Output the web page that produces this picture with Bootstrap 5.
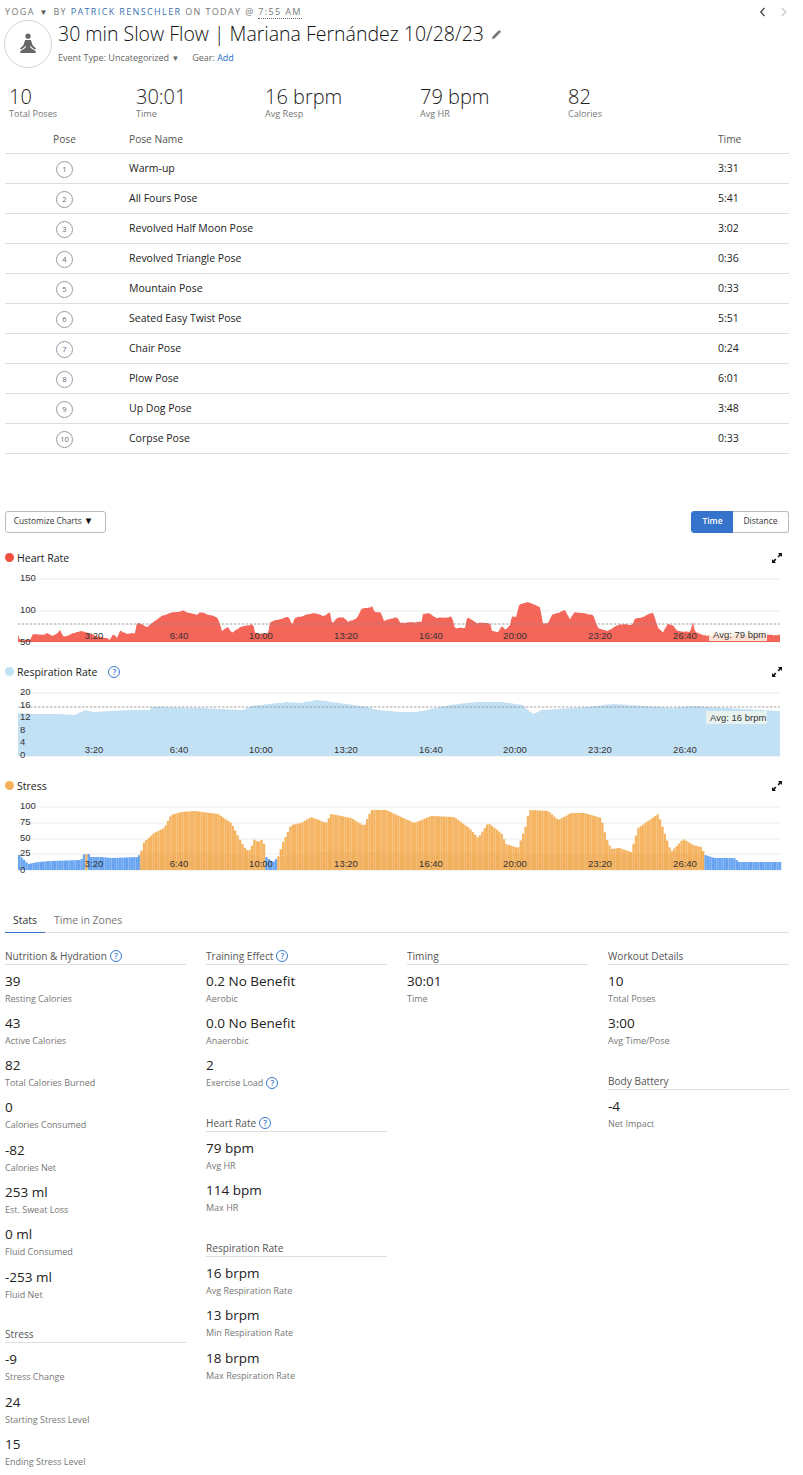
<!DOCTYPE html>
<html lang="en">
<head>
  <meta charset="UTF-8">
  <meta name="viewport" content="width=device-width, initial-scale=1">
  <title>30 min Slow Flow</title>
  <link href="https://cdn.jsdelivr.net/npm/bootstrap@5.3.0/dist/css/bootstrap.min.css" rel="stylesheet">
  <style>
    body { font-family: "Open Sans", sans-serif; color: #222; background: #fff; overflow: hidden; }
    .page-wrap { padding: 0 14px 0 5px; width: 803px; height: 1475px; overflow: hidden; }
    .crumbs { height: 20px; font-size: 9px; letter-spacing: 1.37px; color: #777; text-transform: uppercase; line-height: 12px; padding-top: 6px; position: relative; }
    .crumbs a { color: #3a6fb5; text-decoration: none; }
    .crumbs .dotted { border-bottom: 1px dotted #666; }
    .crumbs .caret-mark { font-size: 8px; letter-spacing: 0; margin: 0 6px 0 1px; color: #555; }
    .pager { position: absolute; right: 0; top: 7px; }
    .activity-icon { width: 48px; height: 48px; border: 1.5px solid #d4d4d4; border-radius: 50%; margin-left: -1px; flex: none; }
    .head-row { height: 48px; margin-top: 0; }
    .head-title { font-size: 19.5px; line-height: 28px; margin: 0; font-weight: 300; color: #111; margin-left: 6px; }
    .head-meta { font-size: 9px; color: #666; line-height: 12px; margin: 4px 0 0 6px; gap: 13px; }
    .head-meta a { color: #2a6ecb; text-decoration: none; }
    .stat-strip { height: 40px; margin-top: 17px; padding-left: 4px; }
    .strip-num { font-size: 20px; line-height: 24px; color: #222; font-weight: 300; }
    .strip-lab { font-size: 9.1px; line-height: 12px; color: #777; margin-top: -1px; }
    .pose-table { font-size: 10.5px; margin: 0; table-layout: fixed; color: #222; }
    .pose-table th { font-weight: 400; font-size: 10.2px; color: #555; height: 28px; padding: 2px 5px 0; vertical-align: middle; border-bottom: 1px solid #ddd; }
    .pose-table td { height: 30px; padding: 2px 5px 0; vertical-align: middle; border-bottom: 1px solid #ddd; }
    .pose-num { width: 17px; height: 17px; border: 1px solid #999; border-radius: 50%; font-size: 7.5px; color: #666; line-height: 15px; text-align: center; display: inline-block; }
    .chart-tools { margin-top: 57px; height: 22px; }
    .customize-btn { font-size: 8.3px; height: 22px; width: 101px; padding: 0 4px 0 0; color: #333; border: 1px solid #bbb; border-radius: 3px; background: #fff; }
    .customize-btn span { color: #111; font-size: 9.5px; line-height: 1; }
    .range-toggle .btn { font-size: 8.5px; height: 22px; padding: 0; color: #333; border: 1px solid #bbb; background: #fff; border-radius: 3px; }
    .range-toggle .btn.active-range { width: 43px; background: #3674cc; border-color: #3674cc; color: #fff; font-weight: 600; border-top-right-radius: 0; border-bottom-right-radius: 0; }
    .range-toggle .btn.plain-range { width: 56px; border-left: 0; border-top-left-radius: 0; border-bottom-left-radius: 0; }
    .chart-title { font-size: 10.5px; color: #222; height: 16px; line-height: 16px; }
    .title-label { gap: 3px; }
    .dot-mark { width: 9px; height: 9px; border-radius: 50%; display: inline-block; flex: none; }
    .help-mark { width: 12px; height: 12px; border: 1.3px solid #3a78d0; border-radius: 50%; font-size: 8.5px; line-height: 10px; text-align: center; color: #3a78d0; display: inline-block; font-weight: 600; flex: none; }
    .expand-icon { margin-right: 7px; }
    .chart-svg { display: block; width: 784px; }
    .chart-svg text { font-family: "Liberation Sans", Arial, sans-serif; font-size: 9.5px; fill: #333; }
    .stat-tabs { border-bottom: 1px solid #ddd; height: 26px; margin-top: 29px; }
    .stat-tabs .nav-link { font-size: 10.5px; line-height: 14px; padding: 6px 0 5px; border: 0; color: #777; background: none; margin-right: 9px; }
    .stat-tabs .nav-link.active { color: #333; width: 40px; text-align: center; border-bottom: 1px solid #3674cc; border-radius: 0; }
    .stats-grid { --bs-gutter-x: 20px; margin-top: 15px; }
    .group-title { font-size: 10.1px; line-height: 16px; height: 17px; border-bottom: 1px solid #ddd; color: #555; margin-bottom: 7px; display: flex; align-items: center; gap: 3px; }
    .group-next { margin-top: 16.5px; }
    .stat-item { height: 42.3px; }
    .stat-val { font-size: 13.5px; line-height: 18px; margin-bottom: 2px; color: #222; }
    .stat-lab { font-size: 9px; line-height: 14px; color: #777; display: flex; align-items: center; gap: 3px; }
  </style>
</head>
<body>
  <div class="page-wrap">
    <!-- Header -->
    <div class="crumbs">
      Yoga <span class="caret-mark">▼</span>By <a href="#">Patrick Renschler</a> on today @ <span class="dotted">7:55 AM</span>
      <svg class="pager" width="34" height="10" viewBox="0 0 34 10"><path d="M9.500 1 5.800 5l3.700 4" fill="none" stroke="#555" stroke-width="1.5"/><path d="M27 1l3.700 4L27 9" fill="none" stroke="#ccc" stroke-width="1.5"/></svg>
    </div>
    <div class="d-flex head-row">
      <div class="activity-icon d-flex align-items-center justify-content-center">
        <svg width="20" height="22" viewBox="0 0 20 22"><circle cx="10" cy="3.200" r="2.600" fill="#666"/><path d="M7.200 7h5.600l2 5.500 3.200 3-1 1.200-3.600-2.600-1-1.800v2.400l5 3.200c1 .8.4 2-.8 2H3.400c-1.200 0-1.800-1.200-.8-2l5-3.200v-2.400l-1 1.800-3.600 2.600-1-1.200 3.200-3z" fill="#666"/></svg>
      </div>
      <div>
        <div class="d-flex align-items-center">
          <h1 class="head-title">30 min Slow Flow | Mariana Fernández 10/28/23</h1>
          <svg class="ms-2" width="9" height="9" viewBox="0 0 9 9"><path d="M0 9l.6-2.500L6 1.100 7.900 3 2.500 8.400zM6.700.4l.6-.4 1.700 1.700-.4.600-.6.600L6.100 1z" fill="#777"/></svg>
        </div>
        <div class="head-meta d-flex">
          <span>Event Type: Uncategorized <span class="small">▼</span></span>
          <span>Gear: <a href="#">Add</a></span>
        </div>
      </div>
    </div>

    <!-- Summary numbers -->
    <div class="d-flex stat-strip">
      <div style="width:127px"><div class="strip-num">10</div><div class="strip-lab">Total Poses</div></div>
      <div style="width:129px"><div class="strip-num">30:01</div><div class="strip-lab">Time</div></div>
      <div style="width:155px"><div class="strip-num">16 brpm</div><div class="strip-lab">Avg Resp</div></div>
      <div style="width:148px"><div class="strip-num">79 bpm</div><div class="strip-lab">Avg HR</div></div>
      <div><div class="strip-num">82</div><div class="strip-lab">Calories</div></div>
    </div>

    <!-- Poses -->
    <table class="table pose-table">
      <colgroup><col style="width:119px"><col><col style="width:76px"></colgroup>
      <thead><tr><th class="text-center">Pose</th><th>Pose Name</th><th>Time</th></tr></thead>
      <tbody>
        <tr><td class="text-center"><span class="pose-num">1</span></td><td>Warm-up</td><td>3:31</td></tr>
        <tr><td class="text-center"><span class="pose-num">2</span></td><td>All Fours Pose</td><td>5:41</td></tr>
        <tr><td class="text-center"><span class="pose-num">3</span></td><td>Revolved Half Moon Pose</td><td>3:02</td></tr>
        <tr><td class="text-center"><span class="pose-num">4</span></td><td>Revolved Triangle Pose</td><td>0:36</td></tr>
        <tr><td class="text-center"><span class="pose-num">5</span></td><td>Mountain Pose</td><td>0:33</td></tr>
        <tr><td class="text-center"><span class="pose-num">6</span></td><td>Seated Easy Twist Pose</td><td>5:51</td></tr>
        <tr><td class="text-center"><span class="pose-num">7</span></td><td>Chair Pose</td><td>0:24</td></tr>
        <tr><td class="text-center"><span class="pose-num">8</span></td><td>Plow Pose</td><td>6:01</td></tr>
        <tr><td class="text-center"><span class="pose-num">9</span></td><td>Up Dog Pose</td><td>3:48</td></tr>
        <tr><td class="text-center"><span class="pose-num">10</span></td><td>Corpse Pose</td><td>0:33</td></tr>
      </tbody>
    </table>

    <!-- Charts -->
    <div class="d-flex justify-content-between chart-tools">
      <button class="btn customize-btn">Customize Charts <span>▼</span></button>
      <div class="btn-group range-toggle">
        <button class="btn active-range">Time</button>
        <button class="btn plain-range">Distance</button>
      </div>
    </div>

    <div class="chart-title d-flex align-items-center justify-content-between" style="margin-top:17px">
      <span class="d-flex align-items-center title-label"><i class="dot-mark" style="background:#f04e3e"></i>Heart Rate</span>
      <svg class="expand-icon" width="10" height="10" viewBox="0 0 10 10"><path d="M10 0v4L8.600 2.600 6.800 4.400 5.600 3.200 7.400 1.400 6 0zM0 10V6l1.400 1.400 1.800-1.800 1.200 1.200-1.800 1.800L4 10z" fill="#111"/></svg>
    </div>
    <svg id="hrChart" class="chart-svg" height="84" viewBox="5 566 784 84"></svg>

    <div class="chart-title d-flex align-items-center justify-content-between" style="margin-top:14px">
      <span class="d-flex align-items-center title-label"><i class="dot-mark" style="background:#bfe0f5"></i>Respiration Rate<i class="help-mark ms-2 fst-normal">?</i></span>
      <svg class="expand-icon" width="10" height="10" viewBox="0 0 10 10"><path d="M10 0v4L8.600 2.600 6.800 4.400 5.600 3.200 7.400 1.400 6 0zM0 10V6l1.400 1.400 1.800-1.800 1.200 1.200-1.800 1.800L4 10z" fill="#111"/></svg>
    </div>
    <svg id="respChart" class="chart-svg" height="84" viewBox="5 680 784 84"></svg>

    <div class="chart-title d-flex align-items-center justify-content-between" style="margin-top:14px">
      <span class="d-flex align-items-center title-label"><i class="dot-mark" style="background:#f5b05a"></i>Stress</span>
      <svg class="expand-icon" width="10" height="10" viewBox="0 0 10 10"><path d="M10 0v4L8.600 2.600 6.800 4.400 5.600 3.200 7.400 1.400 6 0zM0 10V6l1.400 1.400 1.800-1.800 1.200 1.200-1.800 1.800L4 10z" fill="#111"/></svg>
    </div>
    <svg id="stressChart" class="chart-svg" height="84" viewBox="5 794 784 84"></svg>

    <!-- Stats -->
    <ul class="nav stat-tabs">
      <li class="nav-item"><a class="nav-link active" href="#">Stats</a></li>
      <li class="nav-item"><a class="nav-link" href="#">Time in Zones</a></li>
    </ul>
    <div class="row stats-grid">
      <div class="col-3">
        <div class="group-title">Nutrition &amp; Hydration <i class="help-mark fst-normal">?</i></div>
        <div class="stat-item"><div class="stat-val">39</div><div class="stat-lab">Resting Calories</div></div>
        <div class="stat-item"><div class="stat-val">43</div><div class="stat-lab">Active Calories</div></div>
        <div class="stat-item"><div class="stat-val">82</div><div class="stat-lab">Total Calories Burned</div></div>
        <div class="stat-item"><div class="stat-val">0</div><div class="stat-lab">Calories Consumed</div></div>
        <div class="stat-item"><div class="stat-val">-82</div><div class="stat-lab">Calories Net</div></div>
        <div class="stat-item"><div class="stat-val">253 ml</div><div class="stat-lab">Est. Sweat Loss</div></div>
        <div class="stat-item"><div class="stat-val">0 ml</div><div class="stat-lab">Fluid Consumed</div></div>
        <div class="stat-item"><div class="stat-val">-253 ml</div><div class="stat-lab">Fluid Net</div></div>
        <div class="group-title group-next">Stress</div>
        <div class="stat-item"><div class="stat-val">-9</div><div class="stat-lab">Stress Change</div></div>
        <div class="stat-item"><div class="stat-val">24</div><div class="stat-lab">Starting Stress Level</div></div>
        <div class="stat-item"><div class="stat-val">15</div><div class="stat-lab">Ending Stress Level</div></div>
      </div>
      <div class="col-3">
        <div class="group-title">Training Effect <i class="help-mark fst-normal">?</i></div>
        <div class="stat-item"><div class="stat-val">0.2 No Benefit</div><div class="stat-lab">Aerobic</div></div>
        <div class="stat-item"><div class="stat-val">0.0 No Benefit</div><div class="stat-lab">Anaerobic</div></div>
        <div class="stat-item"><div class="stat-val">2</div><div class="stat-lab">Exercise Load <i class="help-mark fst-normal">?</i></div></div>
        <div class="group-title group-next">Heart Rate <i class="help-mark fst-normal">?</i></div>
        <div class="stat-item"><div class="stat-val">79 bpm</div><div class="stat-lab">Avg HR</div></div>
        <div class="stat-item"><div class="stat-val">114 bpm</div><div class="stat-lab">Max HR</div></div>
        <div class="group-title group-next">Respiration Rate</div>
        <div class="stat-item"><div class="stat-val">16 brpm</div><div class="stat-lab">Avg Respiration Rate</div></div>
        <div class="stat-item"><div class="stat-val">13 brpm</div><div class="stat-lab">Min Respiration Rate</div></div>
        <div class="stat-item"><div class="stat-val">18 brpm</div><div class="stat-lab">Max Respiration Rate</div></div>
      </div>
      <div class="col-3">
        <div class="group-title">Timing</div>
        <div class="stat-item"><div class="stat-val">30:01</div><div class="stat-lab">Time</div></div>
      </div>
      <div class="col-3">
        <div class="group-title">Workout Details</div>
        <div class="stat-item"><div class="stat-val">10</div><div class="stat-lab">Total Poses</div></div>
        <div class="stat-item"><div class="stat-val">3:00</div><div class="stat-lab">Avg Time/Pose</div></div>
        <div class="group-title group-next">Body Battery</div>
        <div class="stat-item"><div class="stat-val">-4</div><div class="stat-lab">Net Impact</div></div>
      </div>
    </div>
  </div>

  <script src="https://cdn.jsdelivr.net/npm/bootstrap@5.3.0/dist/js/bootstrap.bundle.min.js"></script>
  <script>
    // chart outlines, read off in page pixels: [x, y, x, y, ...]
    const hrLine = [18,635,20,640,30,640,33,634,43,635,47,633,52,636,58,633,60,630,63,636,68,636,73,633,83,631,88,633,100,637,108,638,110,641,112,635,115,635,117,638,120,631,128,634,135,633,137,622,147,627,160,617,170,613,183,611,197,615,200,612,213,616,218,618,222,631,228,627,232,633,240,627,253,624,255,633,268,634,270,622,287,617,289,617,292,625,295,618,313,613,325,616,330,612,332,624,337,618,343,617,348,622,357,618,362,608,370,608,372,606,375,612,382,613,383,621,397,617,400,623,417,622,422,622,423,614,428,613,437,618,452,617,455,628,465,628,467,617,477,623,490,623,492,631,498,632,502,626,505,630,510,625,512,616,516,617,519,605,528,602,540,607,543,624,548,623,552,615,565,610,570,619,575,612,593,615,598,628,607,631,620,624,632,625,635,619,643,617,653,612,658,628,663,632,668,624,673,625,677,631,690,632,693,622,695,632,707,636,767,635,780,635];
    const respLine = [18,713,33,714,60,714,75,715,85,710,93,712,127,710,150,710,152,707,200,708,243,710,252,706,287,702,300,703,317,700,347,704,367,707,377,710,400,712,417,712,440,707,457,704,477,702,503,702,522,705,533,714,542,710,587,707,613,704,673,708,693,706,707,707,780,711];
    const stressLine = [18,855,27,864,37,862,50,861,80,860,83,854,88,854,89,857,100,857,110,858,137,857,140,852,143,842,153,833,163,828,170,815,180,812,193,811,217,814,230,823,240,842,245,850,250,850,252,839,257,842,262,839,265,857,272,862,277,857,282,842,290,825,300,823,310,817,325,823,330,814,350,818,363,826,370,810,385,810,400,817,413,823,430,816,453,817,468,828,477,838,487,823,500,833,505,844,517,848,525,825,528,810,547,811,557,820,570,813,583,813,600,818,605,838,610,849,618,848,630,852,637,828,657,814,663,832,670,852,682,839,692,845,700,847,704,855,713,858,733,858,738,862,780,862];
    const xTicks = [[94,'3:20'],[179,'6:40'],[261,'10:00'],[346,'13:20'],[431,'16:40'],[515,'20:00'],[600,'23:20'],[685,'26:40']];

    function yAt(line, x) {
      for (let i = 0; i < line.length - 2; i += 2) {
        if (x >= line[i] && x <= line[i + 2]) {
          const t = (x - line[i]) / ((line[i + 2] - line[i]) || 1);
          return line[i + 1] + t * (line[i + 3] - line[i + 1]);
        }
      }
      return line[line.length - 1];
    }

    // heart rate and respiration get a little sample noise so the edge is not a clean polyline
    function sampled(line, amount) {
      const out = [];
      for (let x = line[0]; x <= line[line.length - 2]; x += 1.5) {
        const wobble = amount * (Math.sin(x * 1.7) + Math.sin(x * 0.61)) / 2;
        out.push(x, Math.round((yAt(line, x) + wobble) * 2) / 2);
      }
      return out;
    }

    function areaPath(line, base) {
      let d = `M${line[0]} ${base}`;
      for (let i = 0; i < line.length; i += 2) d += `L${line[i]} ${line[i + 1]}`;
      return d + `L${line[line.length - 2]} ${base}Z`;
    }

    function grid(ys) {
      return ys.map(y => `<line x1="18" x2="780" y1="${y}" y2="${y}" stroke="#ececec"/>`).join('');
    }

    function labels(yLabels, tickY) {
      const left = yLabels.map(l => `<text x="20" y="${l[1]}">${l[0]}</text>`).join('');
      const ticks = xTicks.map(t => `<text x="${t[0]}" y="${tickY}" text-anchor="middle">${t[1]}</text>`).join('');
      return left + ticks;
    }

    function avgLine(y) {
      return `<line x1="18" x2="780" y1="${y}" y2="${y}" stroke="#8a8a8a" stroke-width=".8" stroke-dasharray="2.500 1.500"/>`;
    }

    document.getElementById('hrChart').innerHTML =
      grid([579, 611, 642]) +
      `<path d="${areaPath(sampled(hrLine, 0.5), 642)}" fill="#f4655a"/>` +
      avgLine(624) +
      '<rect x="709" y="631" width="58" height="10" fill="#fdf6ea" opacity=".85"/>' +
      '<text x="713" y="638">Avg: 79 bpm</text>' +
      labels([[150, 581], [100, 613], [50, 645]], 639);

    document.getElementById('respChart').innerHTML =
      grid([693, 756]) +
      `<path d="${areaPath(sampled(respLine, 0.25), 756)}" fill="#c3e1f5"/>` +
      avgLine(707) +
      '<rect x="706" y="711" width="61" height="13" fill="#e8f3f0"/>' +
      '<text x="710" y="721">Avg: 16 brpm</text>' +
      labels([[20, 695], [16, 708], [12, 720], [8, 733], [4, 745], [0, 758]], 753);

    // stress is drawn as thin bars, blue while resting and orange while stressed
    let bars = '';
    for (let x = 18; x < 780; x += 2.4) {
      const resting = x < 83 || (x >= 87 && x < 139) || (x >= 264 && x < 276) || x >= 704;
      const top = yAt(stressLine, x);
      bars += `<rect x="${x.toFixed(1)}" y="${top.toFixed(1)}" width="2.4" height="${(870 - top).toFixed(1)}" fill="${resting ? '#6aa5f2' : '#f5b461'}"/>`;
    }
    document.getElementById('stressChart').innerHTML =
      grid([807, 823, 839, 854, 870]) + bars +
      '<path d="M139 870V853L180 852 220 853 260 856 264 870ZM283 870V856L320 852 500 853 600 854 704 853V870Z" fill="#e9a24f" opacity=".22"/>' +
      labels([[100, 809], [75, 825], [50, 841], [25, 856], [0, 873]], 867);
  </script>
</body>
</html>
